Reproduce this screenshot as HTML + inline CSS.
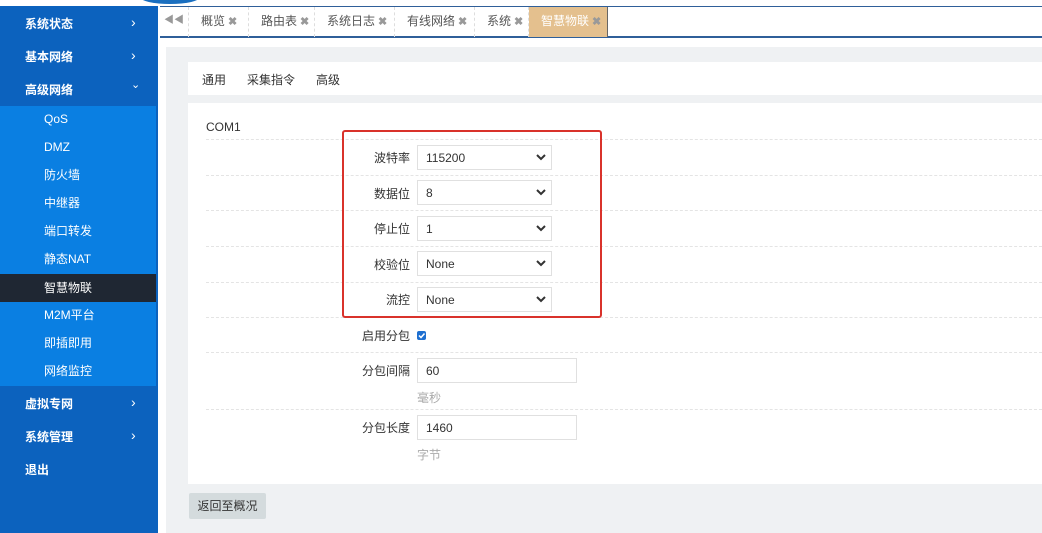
<!DOCTYPE html>
<html><head><meta charset="utf-8"><style>
*{margin:0;padding:0;box-sizing:border-box}
body{width:1042px;height:533px;overflow:hidden;position:relative;background:#fff;font-family:"Liberation Sans","Noto Sans CJK SC",sans-serif;font-size:12px;color:#333}
.a{position:absolute}
.side{left:0;top:6px;width:158px;height:527px;background:#0c62be}
.mi{position:absolute;left:25px;color:#fff;font-weight:bold;font-size:12px}
.ar{position:absolute;left:131px;color:#fff;font-size:14px}
.sub{left:0;top:106px;width:156px;height:280px;background:#0a7fe2}
.si{position:absolute;left:44px;color:#fff;font-size:12px;height:28px;line-height:28px}
.tab{position:absolute;top:7px;height:30px;line-height:28px;border-right:1px dashed #ddd;padding:0 0 0 12px;color:#555;font-size:12px}
.tab b{color:#999;font-size:11px;margin-left:3px}
.row{position:absolute;left:206px;width:836px;border-bottom:1px dashed #e4e4e4}
.lbl{position:absolute;right:632px;width:100px;text-align:right;color:#333;font-size:12px}
.sel{position:absolute;left:417px;width:135px;height:25px;border:1px solid #e0e0e0;background:#fff;padding-left:8px;line-height:24px;font-size:12px;color:#333}
.sel svg{position:absolute;right:5px;top:8px}
.inp{position:absolute;left:417px;width:160px;height:25px;border:1px solid #e0e0e0;padding-left:8px;line-height:24px}
.hint{position:absolute;left:417px;color:#aaa;font-size:12px}
</style></head><body>
<div class="a" style="left:140px;top:-10px;width:60px;height:14px;border-radius:50%;background:#1a6fc0"></div>
<div class="a side"></div>
<div class="mi" style="top:15px">系统状态</div><div class="ar" style="top:14px">›</div>
<div class="mi" style="top:48px">基本网络</div><div class="ar" style="top:47px">›</div>
<div class="mi" style="top:81px">高级网络</div><div class="ar" style="top:78px;font-size:11px">⌄</div>
<div class="a sub"></div>
<div class="a" style="left:0;top:274px;width:156px;height:28px;background:#1f2733"></div>
<div class="si" style="top:105px">QoS</div>
<div class="si" style="top:133px">DMZ</div>
<div class="si" style="top:161px">防火墙</div>
<div class="si" style="top:189px">中继器</div>
<div class="si" style="top:217px">端口转发</div>
<div class="si" style="top:245px">静态NAT</div>
<div class="si" style="top:274px">智慧物联</div>
<div class="si" style="top:301px">M2M平台</div>
<div class="si" style="top:329px">即插即用</div>
<div class="si" style="top:357px">网络监控</div>
<div class="mi" style="top:395px">虚拟专网</div><div class="ar" style="top:394px">›</div>
<div class="mi" style="top:428px">系统管理</div><div class="ar" style="top:427px">›</div>
<div class="mi" style="top:461px">退出</div>
<div class="a" style="left:160px;top:6px;width:882px;height:32px;border-top:1px solid #2f5f99;border-bottom:2px solid #2f5f99;background:#fff"></div>
<div class="tab" style="left:160px;width:29px;padding:0;text-align:center;color:#999;font-size:10px">◀◀</div>
<div class="tab" style="left:189px;width:60px">概览<b>✖</b></div>
<div class="tab" style="left:249px;width:66px">路由表<b>✖</b></div>
<div class="tab" style="left:315px;width:80px">系统日志<b>✖</b></div>
<div class="tab" style="left:395px;width:80px">有线网络<b>✖</b></div>
<div class="tab" style="left:475px;width:54px">系统<b>✖</b></div>
<div class="tab" style="left:529px;width:79px;background:#e4c08e;color:#fff;border-right:1px solid #666">智慧物联<b style="color:#999">✖</b></div>
<div class="a" style="left:166px;top:47px;width:876px;height:486px;background:#eff1f3"></div>
<div class="a" style="left:188px;top:62px;width:854px;height:33px;background:#fff"></div>
<div class="a" style="left:202px;top:71px">通用</div>
<div class="a" style="left:247px;top:71px">采集指令</div>
<div class="a" style="left:316px;top:71px">高级</div>
<div class="a" style="left:188px;top:103px;width:854px;height:381px;background:#fff"></div>
<div class="a" style="left:206px;top:120px">COM1</div>
<div class="row" style="top:139px"></div>
<div class="row" style="top:175px"></div>
<div class="row" style="top:210px"></div>
<div class="row" style="top:246px"></div>
<div class="row" style="top:282px"></div>
<div class="row" style="top:317px"></div>
<div class="row" style="top:352px"></div>
<div class="row" style="top:409px"></div>
<div class="lbl" style="top:149px">波特率</div>
<div class="lbl" style="top:185px">数据位</div>
<div class="lbl" style="top:220px">停止位</div>
<div class="lbl" style="top:256px">校验位</div>
<div class="lbl" style="top:291px">流控</div>
<div class="lbl" style="top:327px">启用分包</div>
<div class="lbl" style="top:362px">分包间隔</div>
<div class="lbl" style="top:419px">分包长度</div>
<div class="sel" style="top:145px">115200<svg width="10" height="7"><path d="M1 1L5 5L9 1" stroke="#333" stroke-width="2" fill="none"/></svg></div>
<div class="sel" style="top:180px">8<svg width="10" height="7"><path d="M1 1L5 5L9 1" stroke="#333" stroke-width="2" fill="none"/></svg></div>
<div class="sel" style="top:216px">1<svg width="10" height="7"><path d="M1 1L5 5L9 1" stroke="#333" stroke-width="2" fill="none"/></svg></div>
<div class="sel" style="top:251px">None<svg width="10" height="7"><path d="M1 1L5 5L9 1" stroke="#333" stroke-width="2" fill="none"/></svg></div>
<div class="sel" style="top:287px">None<svg width="10" height="7"><path d="M1 1L5 5L9 1" stroke="#333" stroke-width="2" fill="none"/></svg></div>
<div class="a" style="left:417px;top:331px;width:9px;height:9px;background:#1e6fd0;border-radius:2px"><svg width="9" height="9" style="display:block"><path d="M2 4.5L4 6.5L7.5 2.5" stroke="#fff" stroke-width="1.5" fill="none"/></svg></div>
<div class="inp" style="top:358px">60</div>
<div class="hint" style="top:389px">毫秒</div>
<div class="inp" style="top:415px">1460</div>
<div class="hint" style="top:446px">字节</div>
<div class="a" style="left:342px;top:130px;width:260px;height:188px;border:2px solid #d9322b;border-radius:3px"></div>
<div class="a" style="left:189px;top:493px;width:77px;height:26px;background:#d4dbdd;border-radius:2px;line-height:26px;text-align:center;color:#333">返回至概况</div>
</body></html>
